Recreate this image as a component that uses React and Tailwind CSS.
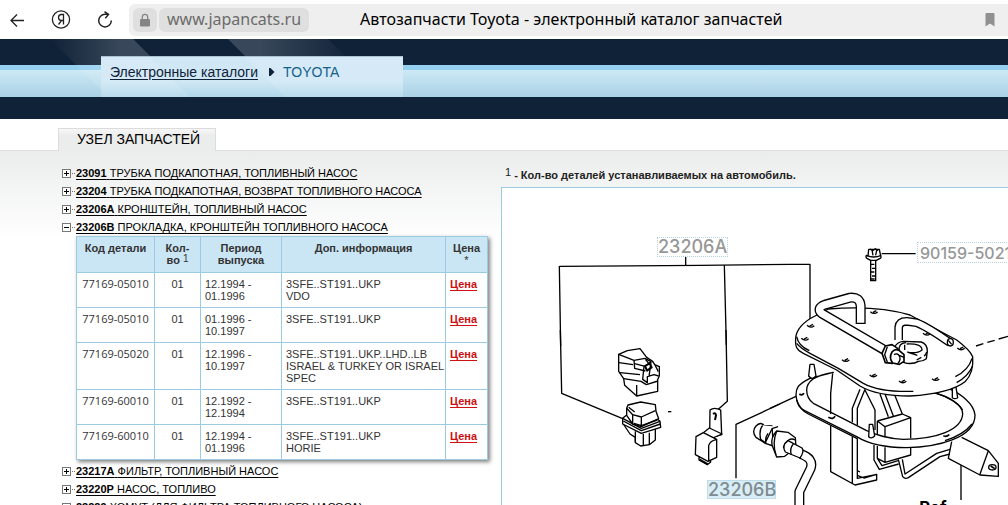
import React from 'react';

const treeTop = [
    { code: '23091', name: 'ТРУБКА ПОДКАПОТНАЯ, ТОПЛИВНЫЙ НАСОС' },
    { code: '23204', name: 'ТРУБКА ПОДКАПОТНАЯ, ВОЗВРАТ ТОПЛИВНОГО НАСОСА' },
    { code: '23206A', name: 'КРОНШТЕЙН, ТОПЛИВНЫЙ НАСОС' },
    { code: '23206B', name: 'ПРОКЛАДКА, КРОНШТЕЙН ТОПЛИВНОГО НАСОСА', open: true },
];

const treeBottom = [
    { code: '23217A', name: 'ФИЛЬТР, ТОПЛИВНЫЙ НАСОС' },
    { code: '23220P', name: 'НАСОС, ТОПЛИВО' },
    { code: '23229', name: 'ХОМУТ (ДЛЯ ФИЛЬТРА ТОПЛИВНОГО НАСОСА)' },
];

const parts = [
    { code: '77169-05010', from: '12.1994 -', to: '01.1996', info: ['3SFE..ST191..UKP', 'VDO'] },
    { code: '77169-05010', from: '01.1996 -', to: '10.1997', info: ['3SFE..ST191..UKP'] },
    { code: '77169-05020', from: '12.1996 -', to: '10.1997', info: ['3SFE..ST191..UKP..LHD..LB', 'ISRAEL & TURKEY OR ISRAEL', 'SPEC'] },
    { code: '77169-60010', from: '12.1992 -', to: '12.1994', info: ['3SFE..ST191..UKP'] },
    { code: '77169-60010', from: '12.1994 -', to: '01.1996', info: ['3SFE..ST191..UKP', 'HORIE'] },
];

const holes = [[105, 27], [227, 91], [310, 137], [398, 155], [497, 148], [470, 12], [573, 56], [312, -53], [122, -12]];

const BrowserBar = () => (
    <div className="flex h-[39px] shrink-0 items-center bg-white font-['Noto_Sans',sans-serif]">
        <div className="flex w-[129px] shrink-0 items-center pl-[9px]">
            <button aria-label="Назад" className="mr-[26px]">
                <svg className="size-4" viewBox="0 0 16 16" fill="none" stroke="#222" strokeWidth="1.3">
                    <path d="M15 8.5H2M8 2.5l-6 6 6 6" />
                </svg>
            </button>
            <button aria-label="Яндекс" className="mr-[25px]">
                <svg className="size-5" viewBox="0 0 20 20" fill="none" stroke="#222" strokeWidth="1.3">
                    <circle cx="10" cy="9.500" r="8.6" />
                    <path d="M12.500 14.500v-10H10.500Q7.500 4.500 7.500 7.500t3 3h2M10.500 10.500l-3 4" />
                </svg>
            </button>
            <button aria-label="Обновить">
                <svg className="size-[18px]" viewBox="0 0 18 18" fill="none" stroke="#222" strokeWidth="1.5">
                    <path d="M15.3 9.5a6.3 6.3 0 1 1-6.3-6.2h3M8.5.7l4 2.8-3.2 3.8" />
                </svg>
            </button>
        </div>
        <div className="flex h-8 min-w-0 grow items-center rounded-l-md bg-[#efefef] pl-1">
            <button aria-label="Сведения о сайте" className="mr-0.5 flex h-6 w-6 shrink-0 items-center justify-center rounded-md bg-[#dfdfdf]">
                <svg className="h-[14px] w-3" viewBox="0 0 12 14">
                    <rect x="1" y="6" width="10" height="7.5" rx="1.2" fill="#858585" />
                    <path d="M3.3 6V4a2.7 2.7 0 0 1 5.4 0v2" fill="none" stroke="#858585" strokeWidth="1.3" />
                </svg>
            </button>
            <a href="#site" className="flex h-6 shrink-0 items-center rounded-md bg-[#dfdfdf] px-2 pb-0.5 text-base text-[#6b6b6b]">www.japancats.ru</a>
            <span className="ml-[51px] grow whitespace-nowrap pb-0.5 text-base text-black">Автозапчасти Toyota - электронный каталог запчастей</span>
            <button aria-label="Закладка" className="mr-[13px]">
                <svg className="h-[14px] w-[10px]" viewBox="0 0 10 14">
                    <path d="M1.5 0h7Q9.500 0 9.500 1v12.500L5 10.500.5 13.500V1q0-1 1-1z" fill="#909090" />
                </svg>
            </button>
        </div>
    </div>
);

const SiteHeader = () => (
    <header className="relative h-20 shrink-0 bg-[#102238] pt-[26px]">
        <div className="h-8 border-t-[5px] border-[#96d0f0] bg-linear-to-b from-[#cde9f5] to-[#a9d1e5]" />
        {/* световые блики поверх полос */}
        <svg className="absolute left-0 top-0 h-[58px] w-[403px]" viewBox="0 0 403 58">
            <defs>
                <linearGradient id="glareA">
                    <stop offset="0" stopColor="#fff" stopOpacity="0" />
                    <stop offset=".5" stopColor="#fff" stopOpacity=".17" />
                </linearGradient>
                <linearGradient id="glareB">
                    <stop offset=".2" stopColor="#fff" stopOpacity=".17" />
                    <stop offset=".8" stopColor="#fff" stopOpacity="0" />
                </linearGradient>
            </defs>
            <path d="M50 0h83l58 58h-83z" fill="url(#glareA)" />
            <path d="M228 0h100l58 58h-100z" fill="url(#glareB)" />
        </svg>
        <nav className="absolute left-[101px] top-[17px] flex h-[41px] w-[302px] items-center border-t border-[#a9c3d4] bg-linear-to-b from-[#d0e8f5] from-60% to-[#b0d7e9] pb-2.5 pl-[9px] text-sm">
            <svg className="absolute inset-0 h-10 w-[302px]" viewBox="0 0 302 40">
                <path d="M0 0h49l40 40H0zM144 0h158v40H184z" fill="#fff" fillOpacity=".12" />
            </svg>
            <a href="#catalogs" className="relative text-[#102238] underline underline-offset-2">Электронные каталоги</a>
            <svg className="relative ml-[11px] mr-2 h-2 w-[6px]" viewBox="0 0 6 8"><path d="M0 0h1.500L5.500 4 1.500 8H0z" fill="#102238" /></svg>
            <a href="#toyota" className="relative text-[#14618a]">TOYOTA</a>
        </nav>
    </header>
);

const TreeItem = ({ item }) => (
    <li className="flex h-[18px] items-center whitespace-nowrap">
        <button aria-label={item.open ? 'Свернуть' : 'Развернуть'} className="mr-px">
            <svg className="h-[9px] w-[13px]" viewBox="0 0 13 9" shapeRendering="crispEdges">
                <path d="M.5 .5h8v8h-8z" fill="#fff" stroke="#777" />
                <path d={item.open ? 'M2 4.5h5' : 'M2 4.5h5M4.500 2v5'} stroke="#000" />
                <path d="M10 4.500h1M12 4.500h1" stroke="#777" />
            </svg>
        </button>
        <a href={`#${item.code}`} className="text-black underline underline-offset-2">
            <b>{item.code}</b> {item.name}
        </a>
    </li>
);

const PartsTable = () => (
    <table className="mb-0.5 ml-[14px] w-[412px] table-fixed border-collapse bg-white text-[#333] shadow-[2px_2px_4px_rgba(0,0,0,0.5)]">
        <colgroup>
            <col className="w-[78px]" />
            <col className="w-[46px]" />
            <col className="w-[81px]" />
            <col />
            <col className="w-[42px]" />
        </colgroup>
        <thead className="bg-[#cae5f3]">
            <tr className="align-top leading-3 [&>th]:border [&>th]:border-[#9bcbe2] [&>th]:px-1 [&>th]:pb-1.5 [&>th]:pt-[5px]">
                <th>Код детали</th>
                <th>Кол-<br />во <span className="align-text-top text-[10px] font-normal leading-none">1</span></th>
                <th>Период<br />выпуска</th>
                <th>Доп. информация</th>
                <th>Цена<br /><span className="font-normal">*</span></th>
            </tr>
        </thead>
        <tbody>
            {parts.map((part, index) => (
                <tr key={index} className="align-top leading-3 [&>td]:border [&>td]:border-[#9bcbe2] [&>td]:px-1 [&>td]:py-[5px]">
                    <td className="text-center font-['Open_Sans',sans-serif] font-medium">{part.code}</td>
                    <td className="text-center">01</td>
                    <td>{part.from}<br />{part.to}</td>
                    <td className="whitespace-nowrap">
                        {part.info.map((line) => <div key={line}>{line}</div>)}
                    </td>
                    <td><a href="#price" className="font-bold text-[#cc1111] underline underline-offset-2">Цена</a></td>
                </tr>
            ))}
        </tbody>
    </table>
);

const Diagram = () => (
    <div className="relative h-[400px] overflow-hidden border border-r-0 border-[#9bcbe2] bg-white">
        <svg className="block h-[317px] w-[506px]" viewBox="0 0 1518 951" fill="none" stroke="#000" strokeWidth="4" strokeLinejoin="round">
            {/* выносные линии */}
            <g transform="translate(-6 -84)">
                <path d="M557 291v25M178 319L600 316 870 313h60v165M178 318l4 240M673 315l6 240" />
            </g>
            <g transform="translate(114 426)">
                <path d="M61 0l4 190 183 76M558 0l4 214-27 24M588 445V283l132-61" />
                <path d="M384 245h10" />
                {/* верхний разъём */}
                <path d="M236 73l26-11 38-6 20 26 18 12 6 10 14 6v27l-5 12v35l-63 14-36-32-3-20-15-22z" fill="#fff" />
                <path d="M236 73l46 18 2 24 32 8M237 98l42 6M240 128l60 6M251 146l52 8 16 10 35-11M282 91l33-6 18 10-18 14-31-8M312 110l-4 38 14 10v-18l20-6 14 4M333 96l-6 44M345 105l10 20M290 165v31M316 88l12 14" />
                <path d="M315 108l14-8 6 12-14 10z" strokeWidth="6" />
                {/* кронштейн с реле */}
                <path d="M510 240q12-10 32 0l3 74-28 8-8-8z" fill="#fff" />
                <path d="M519 252q8-6 9 4l-3 14" strokeWidth="6" />
                <path d="M468 320l22-12 40 20v54l-26 12-38-20zM490 308l18-14 38 18-28 12M506 392v-45q4-14 22-18M477 378v12l25 14 10-8-1-8" fill="#fff" />
                <path d="M478 388l25 14" strokeWidth="6" />
            </g>
            {/* нижний разъём */}
            <g transform="translate(324 456)" fill="#fff">
                <path d="M40 252l20 30 16 10v16l16 10 26-4 18-14v-40z" />
                <path d="M76 274v32M100 282v35M118 278v36" />
                <path d="M50 225l-12 10v17l56 28 58-18-2-18-12-10z" />
                <path d="M38 235l56 30 56-21M40 243l54 29 57-20" fill="none" />
                <path d="M50 205l4-10 38-9 44 8 2 20 8 22-52 24-26-8-18-26z" />
                <path d="M50 205l18 19 26 7 42-19M68 224v28M94 231v30M72 250l22 7 48-17M56 202l18 14" fill="none" />
            </g>

            {/* болт */}
            <g transform="translate(744 -24)">
                <path d="M395 221h102" />
                <path d="M354 228l2-20h32l4 20q3 6-3 8l-10 5h-17l-10-5q-6-3-3-10z" fill="#fff" />
                <path d="M350 226q20 10 44 0M366 210l3 16M380 210l-3 16M360 207l8 5 8-6 8 6" />
                <path d="M362 241v61h15v-61M362 253h11M366 265h11M362 276h11M366 288h11M362 297h12" />
            </g>

            {/* бензонасос в сборе */}
            <g transform="translate(804 426)">
                <path d="M0 235l78-36M618 48l22-7M652 37l22-6M686 27l28-8M573 405v105" />
                <path d="M545 335l-10 50 95 50 55 4v-39l-30-38-80-40" fill="#fff" />
                <path d="M120 145C78 165 78 180 78 195 82 230 90 235 110 245L260 320C300 345 350 353 410 353 500 352 615 325 615 255 612 220 570 190 535 175L490 188C540 200 578 225 578 252 575 300 500 328 400 328 350 326 320 314 290 302L130 220Q110 205 110 180 110 140 190 127z" fill="#fff" />
                <path d="M80 210Q90 240 115 252L262 326M525 332Q580 315 606 282M500 190q60 20 78 50" />
                <path d="M88 192q8 6 14-2M175 262q15 8 20-4M520 317q8 5 18-3" strokeWidth="5" />
                {/* корпус и скобы */}
                <path d="M188 130l-6 60v62M182 286v139l73 40 65-15v-17l-58 12V325M247 320v142M270 178l-23 57v42M285 178l-23 57v50M262 436l20 8 38-11M262 422l8 4" />
                <path d="M285 180l30 60v60M330 192l25 68M345 192l25 66M375 197l22 55" />
                <path d="M322 273l75-21 25 11v62M322 273l23 17 77-27M345 290v32M322 273v40" />
                <path d="M312 345v45l16 28 58-16M322 348v37l23 12 77-22v-22M345 352v45M322 385l14 22 48-15" />
                <path d="M385 388l13 52q7 8 17 3l95-63 30-8M397 388l8 44 95-62 40-12" />
                <path d="M655 362l-26 73" />
                <ellipse cx="667" cy="412" rx="11" ry="8" />
                <path d="M662 408l12 8" strokeWidth="5" />
                <path d="M120 103h12l6 35q-12 14-22 0zM298 283h10l6 35q-10 10-18 2zM547 165v38q8 6 16 0l-6-38z" fill="#fff" />

                {/* крышка */}
                <path d="M135-42C100-25 78 0 77 25 75 50 80 60 100 70L200 120 270 168Q320 198 420 198 540 190 585 155 612 130 608 80 600 60 560 30L475-15 420-45Q320-75 175-63z" fill="#fff" />
                <path d="M80 40q12 15 40 30L205 115 280 160Q330 187 430 184M556 140q40-20 50-55M560 158q35-20 48-50M80 20q5 28 38 42" />
                {holes.map(([x, y]) => (
                    <path key={`${x}-${y}`} d={`M${x - 11} ${y - 2}q11 10 22 1m-14 1l10-5`} />
                ))}

                {/* трубки */}
                <path d="M386 30V-8Q388-26 410-26L440-22Q475-8 540 38" stroke="#000" strokeWidth="26" />
                <path d="M386 34V-8Q388-26 410-26L440-22Q475-8 541 39" stroke="#fff" strokeWidth="18" />
                <ellipse cx="541" cy="37" rx="9" ry="11" fill="#fff" />
                <path d="M535 31l10 12" />
                <path d="M272-18V-72Q270-100 240-97L165-76Q138-66 155-50L350 64" stroke="#000" strokeWidth="30" />
                <path d="M272-22V-72Q270-100 240-97L165-76Q138-66 155-50L352 65" stroke="#fff" strokeWidth="22" />

                {/* штуцер */}
                <path d="M374 52q6-16 26-18l54 2q18 6 18 28l-3 22q-10 8-24 8-12 8-34 6l-30-8z" fill="#fff" />
                <path d="M388 62q-4-22 20-24M410 42q46-2 46 18-12 10-36 8M404 44v16M412 66l30 10M470 66q-2 10-8 12M440 90l14-8" />
                <path d="M336 70l10-22 20-4 18 12-16 44-22-2z" fill="#fff" strokeWidth="5" />
                <path d="M352 50l-8 24 8 22" />
                <path d="M366 66q10-12 22-4l14 12v20l-14 9-20-4q-12-16-2-33z" fill="#fff" strokeWidth="5" />
                <path d="M372 74q10-6 16 4t-4 22M388 76l14 6" />

                {/* шланг */}
                <path d="M92 372Q132 385 122 415L88 485V535" stroke="#000" strokeWidth="30" />
                <path d="M90 371Q132 385 122 415L88 485V535" stroke="#fff" strokeWidth="22" />
                <path d="M-42 322q-14-18 0-34 14-14 24-2l24 2 4 60-24-8z" fill="#fff" />
                <path d="M-22 286q-12 14-6 42l14 10 20-42 18-6M-6 310q-10 14-6 30" fill="#fff" />
                <path d="M6 345q-4-24 14-42l34 4 22 16 2 30-34 26-24 2z" fill="#fff" />
                <path d="M20 303q-14 36-2 72M76 330q-22-12-36 24" />
                <path d="M54 332l42 22q8 10-6 30l-44-18q-12-20 8-34z" fill="#fff" />
                <path d="M70 342q-12 14-6 32" />
            </g>
            <text x="1252" y="979" fill="#000" stroke="none" className="font-['Inter',sans-serif] text-[50px] font-bold">Ref.</text>
        </svg>
        <a href="#23206A" className="absolute left-[155px] top-[49px] flex h-5 w-[71px] items-center border border-dotted border-[#b5d4e0] font-['Inter',sans-serif] text-lg font-medium text-[#979797]">23206A</a>
        <a href="#90159" className="absolute left-[415px] top-[54px] flex h-[21px] w-[130px] items-center border border-dotted border-[#b5d4e0] pl-0.5 font-['Inter',sans-serif] text-base font-medium text-[#979797]">90159-50213</a>
        <a href="#23206B" className="absolute left-[205px] top-[292px] flex h-[19px] w-[69px] items-center border border-[#bfdeeb] bg-[#d9edf6] font-['Inter',sans-serif] text-lg font-medium text-[#7e8b90]">23206B</a>
    </div>
);

const App = () => (
    <div className="flex h-screen flex-col overflow-hidden bg-white font-['Liberation_Sans',Arial,sans-serif]">
        <BrowserBar />
        <SiteHeader />
        <div className="flex h-[31px] shrink-0 items-end pl-[58px]">
            <h1 className="relative z-10 -mb-px flex h-[23px] items-center border border-b-0 border-[#dcdcdc] bg-linear-to-b from-[#f7f7f7] to-[#ebedec] to-30% pb-0.5 pl-[18px] pr-[15px] text-sm text-black">УЗЕЛ ЗАПЧАСТЕЙ</h1>
        </div>
        <main className="flex grow border-t border-[#e0e0e0] bg-linear-to-b from-[#ebedec] to-white to-[90px] pl-[62px] text-[11px]">
            <section className="w-[439px] shrink-0 pt-[13px]">
                <ul>
                    {treeTop.map((item) => <TreeItem key={item.code} item={item} />)}
                </ul>
                <PartsTable />
                <ul>
                    {treeBottom.map((item) => <TreeItem key={item.code} item={item} />)}
                </ul>
            </section>
            <section className="min-w-0 grow">
                <p className="flex h-9 items-center gap-[3px] whitespace-nowrap pl-1 pt-3 font-bold text-[#222]">
                    <span className="pb-1.5 font-normal">1</span>
                    <span>- Кол-во деталей устанавливаемых на автомобиль.</span>
                </p>
                <Diagram />
            </section>
        </main>
    </div>
);

export default App;
